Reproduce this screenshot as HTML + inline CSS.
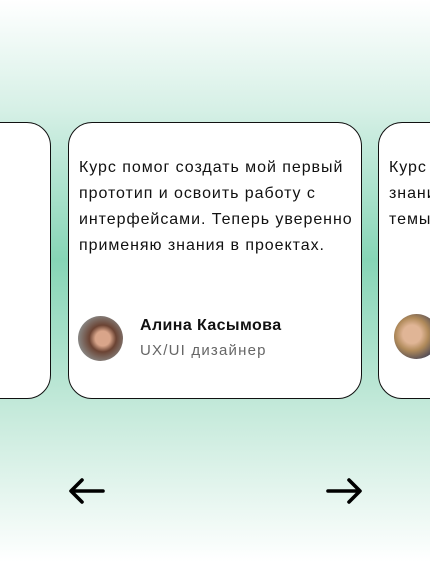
<!DOCTYPE html>
<html><head><meta charset="utf-8"><style>
html,body{margin:0;padding:0}
body{width:430px;height:562px;overflow:hidden;position:relative;font-family:"Liberation Sans","Noto Sans CJK SC",sans-serif;
background:linear-gradient(to bottom,#ffffff 0px,#d6f0e6 110px,#86d5b6 260px,#c9ebdd 420px,#ffffff 562px);}
.wrap{position:absolute;left:0;top:0;width:430px;height:562px;overflow:hidden}
.card{position:absolute;top:122px;height:277px;background:#fff;border:1.3px solid #111;border-radius:24px;box-sizing:border-box;overflow:hidden}
.txt{position:absolute;left:10px;top:32px;font-size:16px;line-height:26px;color:#111;white-space:nowrap;letter-spacing:0.95px}
.av{position:absolute;width:45px;height:45px;border-radius:50%}
.name{position:absolute;left:71px;top:194px;font-size:16px;font-weight:bold;color:#111;letter-spacing:0.4px}
.role{position:absolute;left:71px;top:219px;font-size:15px;color:#666;letter-spacing:1.2px}
</style></head><body><div class="wrap">
<div class="card" style="left:-250px;width:301px"></div>
<div class="card" style="left:68px;width:294px">
 <div class="txt">Курс помог создать мой первый<br>прототип и освоить работу с<br>интерфейсами. Теперь уверенно<br>применяю знания в проектах.</div>
 <div class="av" style="left:9px;top:193px;background:radial-gradient(circle at 55% 50%,#d9a58a 0 22%,#6b4333 40%,#8a8a88 75%)"></div>
 <div class="name">Алина Касымова</div>
 <div class="role">UX/UI дизайнер</div>
</div>
<div class="card" style="left:378px;width:294px">
 <div class="txt">Курс помог<br>знания<br>темы</div>
 <div class="av" style="left:15px;top:191px;background:radial-gradient(circle at 40% 45%,#e0b596 0 25%,#b08a5a 45%,#3b3d55 80%)"></div>
</div>
<svg style="position:absolute;left:68px;top:476px" width="38" height="30" viewBox="0 0 38 30"><path d="M35 15H4M14 4L3 15L14 26" fill="none" stroke="#000" stroke-width="3.6" stroke-linecap="round" stroke-linejoin="round"/></svg>
<svg style="position:absolute;left:325px;top:476px" width="38" height="30" viewBox="0 0 38 30"><path d="M3 15H34M24 4L35 15L24 26" fill="none" stroke="#000" stroke-width="3.6" stroke-linecap="round" stroke-linejoin="round"/></svg>
</div></body></html>
